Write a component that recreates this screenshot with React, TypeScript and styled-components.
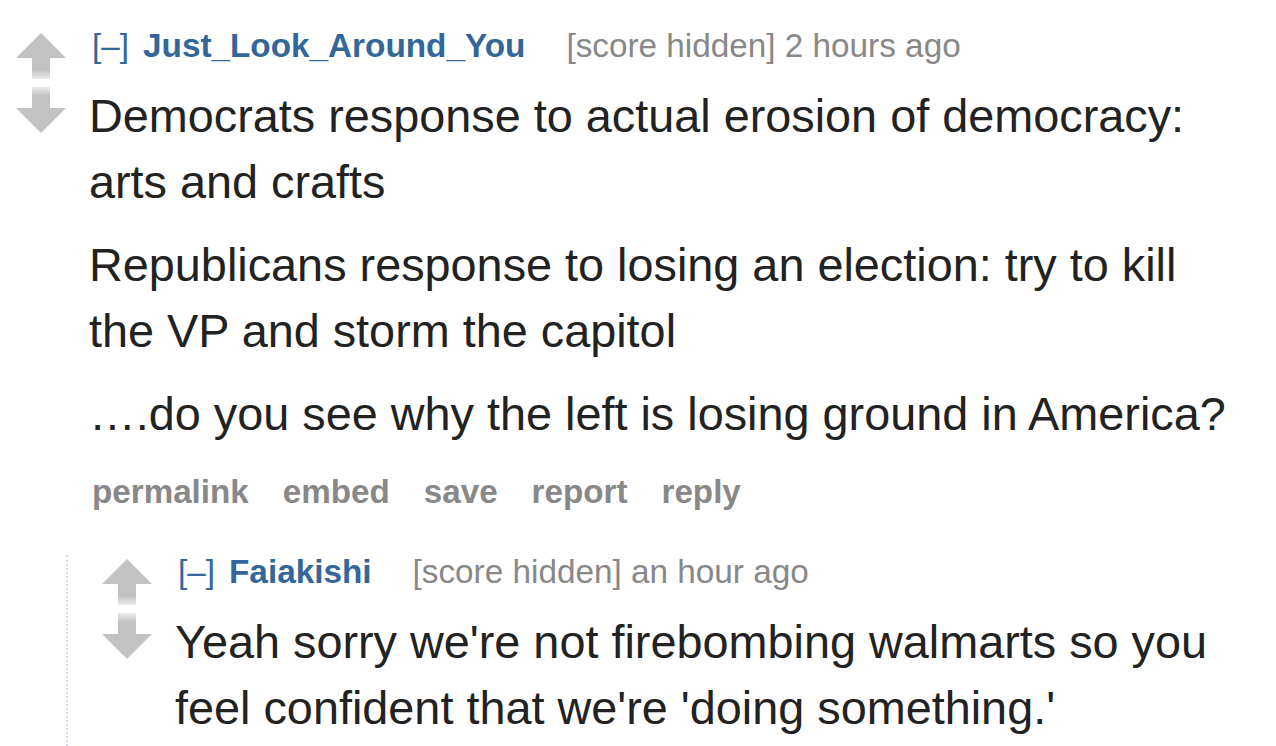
import React from "react";
import styled, { createGlobalStyle } from "styled-components";

const GlobalStyle = createGlobalStyle`
  html, body {
    margin: 0;
    padding: 0;
    background: #fff;
  }
  body {
    font-family: "Liberation Sans", Arial, sans-serif;
    overflow: hidden;
  }
`;

interface CommentData {
  author: string;
  time: string;
  paragraphs: string[];
  showButtons?: boolean;
  replies?: CommentData[];
}

const thread: CommentData = {
  author: "Just_Look_Around_You",
  time: "2 hours ago",
  paragraphs: [
    "Democrats response to actual erosion of democracy: arts and crafts",
    "Republicans response to losing an election: try to kill the VP and storm the capitol",
    "\u2026.do you see why the left is losing ground in America?",
  ],
  showButtons: true,
  replies: [
    {
      author: "Faiakishi",
      time: "an hour ago",
      paragraphs: [
        "Yeah sorry we're not firebombing walmarts so you feel confident that we're 'doing something.'",
      ],
    },
  ],
};

function Arrow({ down }: { down?: boolean }) {
  const id = down ? "gradDown" : "gradUp";
  return (
    <svg width="50" height="46" viewBox="0 0 50 46">
      <defs>
        <linearGradient id={id} x1="0" y1={down ? "1" : "0"} x2="0" y2={down ? "0" : "1"}>
          <stop offset="0" stopColor="#c2c2c2" />
          <stop offset="0.6" stopColor="#c2c2c2" />
          <stop offset="1" stopColor="#ececec" />
        </linearGradient>
      </defs>
      {down ? (
        <g>
          <rect x="16" y="0" width="18" height="22" fill={`url(#${id})`} />
          <polygon points="0,21 50,21 25,46" fill="#c2c2c2" />
        </g>
      ) : (
        <g>
          <polygon points="25,0 50,25 0,25" fill="#c2c2c2" />
          <rect x="16" y="24" width="18" height="22" fill={`url(#${id})`} />
        </g>
      )}
    </svg>
  );
}

function Comment({ data }: { data: CommentData }) {
  return (
    <CommentBox>
      <Row>
        <Votes>
          <Arrow />
          <Arrow down />
        </Votes>
        <Entry>
          <Tagline>
            <Expand>[–]</Expand>
            <Author>{data.author}</Author>
            <Score>[score hidden] {data.time}</Score>
          </Tagline>
          <Body>
            {data.paragraphs.map((p, i) => (
              <Para key={i}>{p}</Para>
            ))}
          </Body>
          {data.showButtons && (
            <Buttons>
              {["permalink", "embed", "save", "report", "reply"].map((b) => (
                <Button key={b}>{b}</Button>
              ))}
            </Buttons>
          )}
        </Entry>
      </Row>
      {data.replies && data.replies.length > 0 && (
        <Child>
          {data.replies.map((r, i) => (
            <Comment key={i} data={r} />
          ))}
        </Child>
      )}
    </CommentBox>
  );
}

export default function App() {
  return (
    <Page>
      <GlobalStyle />
      <Comment data={thread} />
    </Page>
  );
}

const Page = styled.div`
  padding: 29px 36px 0 16px;
  box-sizing: border-box;
  width: 1276px;
  height: 746px;
  overflow: hidden;
`;

const CommentBox = styled.div`
  display: flex;
  flex-direction: column;
`;

const Row = styled.div`
  display: flex;
  align-items: flex-start;
`;

const Votes = styled.div`
  display: flex;
  flex-direction: column;
  gap: 8px;
  width: 50px;
  flex-shrink: 0;
  margin-top: 4px;
  margin-right: 23px;
  svg {
    display: block;
  }
`;

const Entry = styled.div`
  flex: 1;
  min-width: 0;
`;

const Tagline = styled.div`
  display: flex;
  align-items: baseline;
  font-size: 33.3px;
  line-height: 33px;
  white-space: nowrap;
`;

const Expand = styled.span`
  color: #369;
  margin-left: 3px;
  margin-right: 14px;
`;

const Author = styled.span`
  color: #369;
  font-weight: 700;
  margin-right: 41px;
`;

const Score = styled.span`
  color: #888;
`;

const Body = styled.div`
  margin-top: 21px;
  color: #222;
  font-size: 46.8px;
  line-height: 66px;
`;

const Para = styled.p`
  margin: 0 0 17px 0;
`;

const Buttons = styled.div`
  display: flex;
  gap: 34px;
  padding: 11px 0 0 3px;
`;

const Button = styled.span`
  color: #888;
  font-weight: 700;
  font-size: 33.2px;
  line-height: 33px;
`;

const Child = styled.div`
  margin-top: 47px;
  margin-left: 50px;
  padding-left: 34px;
  border-left: 2px dotted #d4d4f4;
`;
